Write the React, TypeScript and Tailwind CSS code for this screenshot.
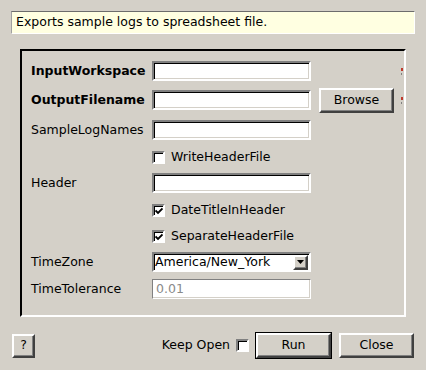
import React from "react";

const font = { fontFamily: '"DejaVu Sans", "Liberation Sans", sans-serif' };

function Sunken({ children, className = "" }: { children?: React.ReactNode; className?: string }) {
  return (
    <div
      className={
        "box-border border-2 border-t-[#808080] border-l-[#808080] border-r-white border-b-white bg-white shadow-[inset_1px_1px_0_#000,inset_-1px_-1px_0_#d4d0c8] " +
        className
      }
    >
      {children}
    </div>
  );
}

function Button({ children, className = "" }: { children?: React.ReactNode; className?: string }) {
  return (
    <div
      className={
        "box-border flex items-center justify-center border-2 border-t-white border-l-white border-r-[#404040] border-b-[#404040] bg-[#d4d0c8] text-black shadow-[inset_-1px_-1px_0_#808080] " +
        className
      }
    >
      {children}
    </div>
  );
}

function Check({ checked }: { checked?: boolean }) {
  return (
    <div className="relative box-border h-[13px] w-[13px] border-2 border-t-[#808080] border-l-[#808080] border-r-white border-b-white bg-white shadow-[inset_1px_1px_0_#000]">
      {checked && (
        <svg className="absolute left-[1px] top-[1px]" width="8" height="8" viewBox="0 0 8 8">
          <path d="M0.5 3.5 L3 6 L7.5 1.5" stroke="#000" strokeWidth="1.8" fill="none" />
        </svg>
      )}
    </div>
  );
}

function Star() {
  return (
    <div className="ml-[7px] flex h-full w-[2px] items-center overflow-hidden">
      <div className="flex flex-col">
        <div className="h-[3px] w-[2px] bg-[#c0392b]" />
        <div className="mt-[2px] h-[2px] w-[1px] bg-[#808080]" />
      </div>
    </div>
  );
}

function Row({ h, children }: { h: number; children: React.ReactNode }) {
  return (
    <div className="grid grid-cols-[121px_159px_auto] items-center" style={{ height: h }}>
      {children}
    </div>
  );
}

export default function App() {
  return (
    <div className="relative h-[370px] w-[426px] overflow-hidden bg-[#d4d0c8] text-[12.5px] text-black" style={font}>
      <div className="px-[11px] pt-[11px]">
        <div className="box-border flex h-[23px] items-center border border-t-[#6c6c6c] border-l-[#a0a0a0] border-r-white border-b-white bg-[#ffffe1] pl-[4px]">
          Exports sample logs to spreadsheet file.
        </div>
      </div>

      <div className="ml-[20px] mt-[15px] box-border h-[268px] w-[386px] overflow-hidden border-2 border-t-black border-l-black border-r-white border-b-white pl-[9px] pt-[7px]">
        <Row h={26}>
          <div className="font-bold">InputWorkspace</div>
          <Sunken className="h-[20px]" />
          <div className="flex h-full items-center">
            <div className="w-[75px]" />
            <div className="w-[8px]" />
            <Star />
          </div>
        </Row>
        <Row h={32}>
          <div className="font-bold">OutputFilename</div>
          <Sunken className="h-[20px]" />
          <div className="flex h-full items-center">
            <div className="w-[8px]" />
            <Button className="h-[25px] w-[75px]">Browse</Button>
            <Star />
          </div>
        </Row>
        <Row h={28}>
          <div>SampleLogNames</div>
          <Sunken className="h-[20px]" />
          <div />
        </Row>
        <Row h={26}>
          <div />
          <div className="flex items-center gap-[6px]">
            <Check />
            <span>WriteHeaderFile</span>
          </div>
          <div />
        </Row>
        <Row h={26}>
          <div>Header</div>
          <Sunken className="h-[20px]" />
          <div />
        </Row>
        <Row h={28}>
          <div />
          <div className="flex items-center gap-[6px]">
            <Check checked />
            <span>DateTitleInHeader</span>
          </div>
          <div />
        </Row>
        <Row h={24}>
          <div />
          <div className="flex items-center gap-[6px]">
            <Check checked />
            <span>SeparateHeaderFile</span>
          </div>
          <div />
        </Row>
        <Row h={28}>
          <div>TimeZone</div>
          <div className="box-border flex h-[20px] items-center border-2 border-t-[#808080] border-l-[#808080] border-r-white border-b-white bg-white pl-[1px] shadow-[inset_1px_1px_0_#000]">
            <span className="flex-1">America/New_York</span>
            <Button className="mr-[1px] h-[15px] w-[15px]">
              <svg width="7" height="4" viewBox="0 0 7 4">
                <path d="M0 0 H7 L3.5 4 Z" fill="#000" />
              </svg>
            </Button>
          </div>
          <div />
        </Row>
        <Row h={26}>
          <div>TimeTolerance</div>
          <div className="box-border flex h-[20px] items-center border border-t-[#808080] border-l-[#808080] border-r-white border-b-white bg-white pl-[3px] text-[#8a8a8a] shadow-[inset_-1px_-1px_0_#d4d0c8]">
            0.01
          </div>
          <div />
        </Row>
      </div>

      <div className="mt-[15px] flex items-center px-[12px]">
        <Button className="h-[24px] w-[23px]">?</Button>
        <div className="flex-1" />
        <span>Keep Open</span>
        <div className="ml-[6px]">
          <Check />
        </div>
        <div className="ml-[6px] box-border h-[27px] w-[77px] border border-black">
          <Button className="h-full w-full">Run</Button>
        </div>
        <Button className="ml-[7px] h-[25px] w-[75px]">Close</Button>
      </div>
    </div>
  );
}
